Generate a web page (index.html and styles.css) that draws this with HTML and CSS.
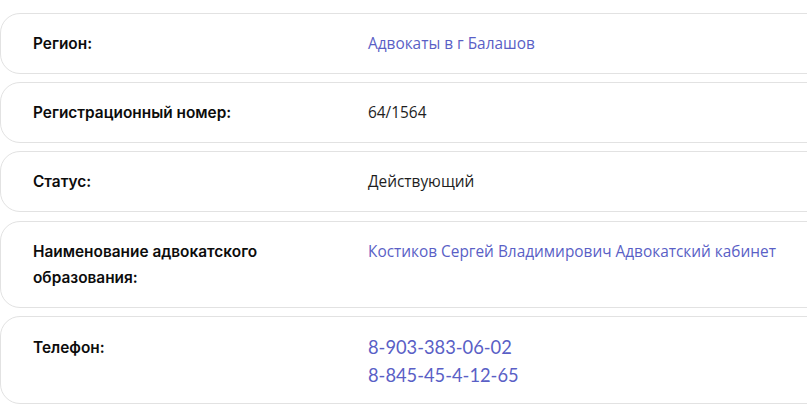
FILE: index.html
```html
<!DOCTYPE html>
<html lang="ru">
<head>
<meta charset="utf-8">
<link rel="stylesheet" href="styles.css">
</head>
<body>
<div class="page">
  <div class="list">
    <div class="row">
      <div class="label">Регион:</div>
      <div class="value"><a class="link" href="#">Адвокаты в г Балашов</a></div>
    </div>
    <div class="row">
      <div class="label">Регистрационный номер:</div>
      <div class="value">64/1564</div>
    </div>
    <div class="row">
      <div class="label">Статус:</div>
      <div class="value">Действующий</div>
    </div>
    <div class="row">
      <div class="label">Наименование адвокатского образования:</div>
      <div class="value"><a class="link" href="#">Костиков Сергей Владимирович Адвокатский кабинет</a></div>
    </div>
    <div class="row row-phone">
      <div class="label label-phone">Телефон:</div>
      <div class="value phones">
        <a class="link phone" href="#">8-903-383-06-02</a>
        <a class="link phone" href="#">8-845-45-4-12-65</a>
      </div>
    </div>
  </div>
</div>
</body>
</html>
```
FILE: styles.css
```css
html, body {
  margin: 0;
  padding: 0;
  background: #ffffff;
}
.page {
  width: 807px;
  height: 418px;
  overflow: hidden;
  padding-top: 13px;
  box-sizing: border-box;
}
.list {
  display: flex;
  flex-direction: column;
  gap: 8.2px;
  width: 940px;
}
.row {
  display: grid;
  grid-template-columns: 335px 1fr;
  border: 1px solid #e2e2e2;
  border-radius: 20px;
  padding: 17px 0 16px 32px;
}
.row-phone {
  padding-top: 16px;
  padding-bottom: 14px;
}
.label {
  font-family: Inter, "Noto Sans", sans-serif;
  font-weight: 600;
  font-size: 15.4px;
  line-height: 26px;
  color: #0c0c0c;
  width: 250px;
}
.label-phone {
  padding-top: 2px;
}
.value {
  font-family: "Open Sans", "Noto Sans", sans-serif;
  font-size: 15.4px;
  line-height: 26px;
  color: #1e1e1e;
}
.link {
  color: #5a5fc6;
  text-decoration: none;
}
.phones {
  display: flex;
  flex-direction: column;
}
.phone {
  font-family: Lato, "Open Sans", sans-serif;
  font-size: 18.3px;
  line-height: 28px;
}
```
